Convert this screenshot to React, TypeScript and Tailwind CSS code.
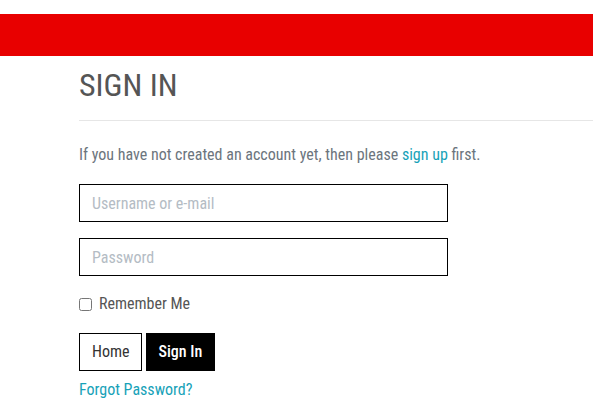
import React from "react";

export default function App() {
  return (
    <div
      className="min-h-[415px] bg-white"
      style={{ fontFamily: "Roboto, 'Liberation Sans', sans-serif", fontStretch: "75%" }}
    >
      <div className="h-[14px]" />
      <div className="h-[42px] bg-[#e80000]" />
      <div className="pl-[79px]">
        <h1 className="mt-[10px] text-[32px] leading-[38px] text-[#555555] font-normal">SIGN IN</h1>
        <div className="mt-[16px] border-t border-[#e6e6e6]" />
        <p className="mt-[23px] text-[16px] leading-[22px] text-[#6c757d]">
          If you have not created an account yet, then please{" "}
          <a className="text-[#17a2b8]">sign up</a> first.
        </p>
        <div className="mt-[18px] flex flex-col gap-[16px] w-[369px]">
          <input
            className="h-[38px] border-[1.5px] border-black px-[12px] text-[16px] placeholder:text-[#b4bcc4] outline-none"
            placeholder="Username or e-mail"
            style={{ fontStretch: "75%" }}
          />
          <input
            type="password"
            className="h-[38px] border-[1.5px] border-black px-[12px] text-[16px] placeholder:text-[#b4bcc4] outline-none"
            placeholder="Password"
            style={{ fontStretch: "75%" }}
          />
        </div>
        <label className="mt-[17px] flex items-center gap-[7px] text-[16px] leading-[22px] text-[#555555]">
          <input type="checkbox" className="w-[13px] h-[13px] m-0" />
          Remember Me
        </label>
        <div className="mt-[18px] flex gap-[4px]">
          <button
            className="h-[38px] pl-[12px] pr-[11px] border border-black bg-white text-[16px] text-[#333]"
            style={{ fontStretch: "75%" }}
          >
            Home
          </button>
          <button
            className="h-[38px] px-[13px] bg-black text-white text-[16px] font-medium"
            style={{ fontStretch: "75%" }}
          >
            Sign In
          </button>
        </div>
        <a className="block mt-[8px] text-[16px] leading-[22px] text-[#17a2b8]">Forgot Password?</a>
      </div>
    </div>
  );
}
